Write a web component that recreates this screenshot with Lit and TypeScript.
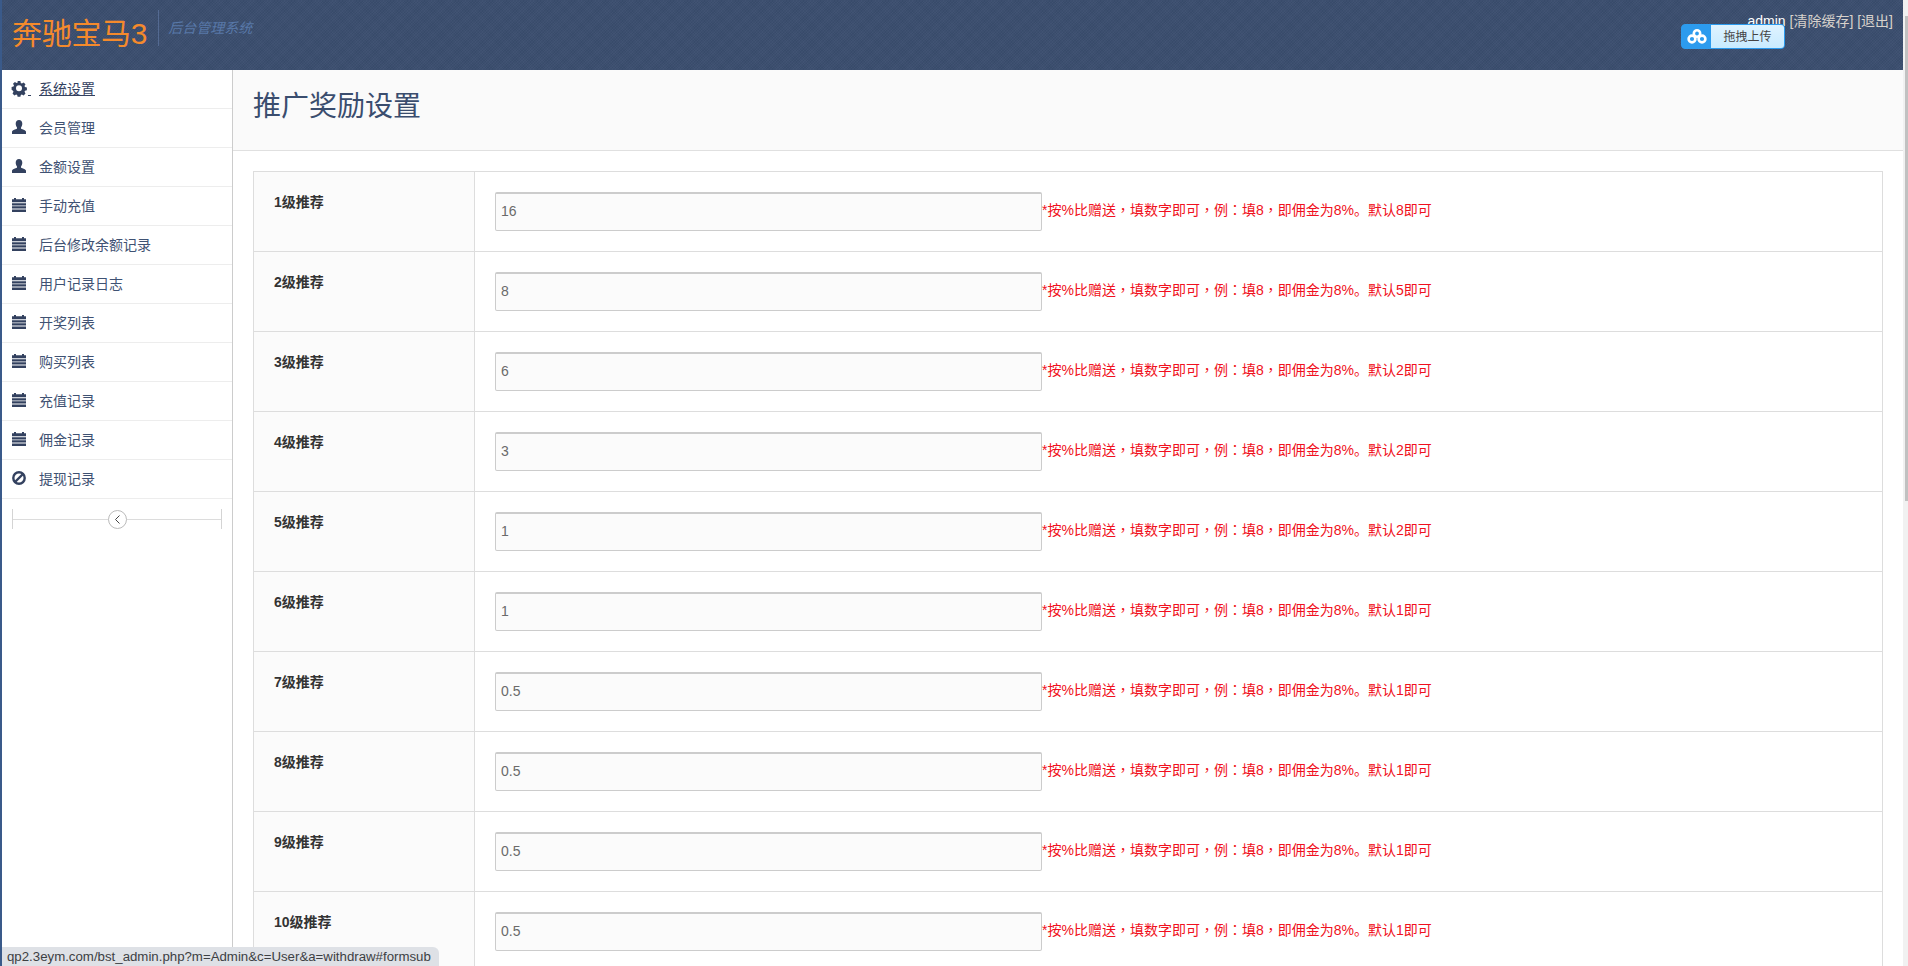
import { LitElement, html, css, svg } from "lit";
import { customElement } from "lit/decorators.js";

const gear = svg`<path fill-rule="evenodd" d="M5.600 0h2.800l.4 1.900 1.100.5 1.700-1 1.900 1.900-1 1.700.5 1.100 1.900.4v2.800l-1.900.4-.5 1.100 1 1.700-1.900 1.900-1.700-1-1.100.5-.4 1.900H5.600l-.4-1.900-1.100-.5-1.700 1-1.900-1.900 1-1.700-.5-1.100L-.4 8.800V6l1.900-.4.500-1.100-1-1.700 1.900-1.900 1.700 1 1.100-.5zM7 4.300a3 3 0 1 0 0 6 3 3 0 0 0 0-6z"/>`;
const user = svg`<path d="M7 0c2.100 0 3.300 1.600 3.300 3.700 0 1.500-.6 2.900-1.300 3.700v1.100c0 .7 4.300 1.200 5 3V14H0v-2.500c.7-1.800 5-2.300 5-3V7.400C4.300 6.600 3.700 5.200 3.700 3.700 3.700 1.600 4.900 0 7 0z"/>`;
const calendar = svg`<path d="M2 0h2v1.200h6V0h2v1.200h2V4.200H0V1.200h2zM0 5.200h14v2.300H0zM0 8.300h14v2.300H0zM0 11.400h14V14H0z"/>`;
const ban = svg`<circle cx="7" cy="7" r="5.700" fill="none" stroke="#33415f" stroke-width="2.400"/><path d="M11 3 3 11" fill="none" stroke="#33415f" stroke-width="2.400"/>`;

const MENU: [string, ReturnType<typeof svg>][] = [
  ["系统设置", gear],
  ["会员管理", user],
  ["金额设置", user],
  ["手动充值", calendar],
  ["后台修改余额记录", calendar],
  ["用户记录日志", calendar],
  ["开奖列表", calendar],
  ["购买列表", calendar],
  ["充值记录", calendar],
  ["佣金记录", calendar],
  ["提现记录", ban],
];

const ROWS: [string, string, string][] = [
  ["1级推荐", "16", "8"],
  ["2级推荐", "8", "5"],
  ["3级推荐", "6", "2"],
  ["4级推荐", "3", "2"],
  ["5级推荐", "1", "2"],
  ["6级推荐", "1", "1"],
  ["7级推荐", "0.5", "1"],
  ["8级推荐", "0.5", "1"],
  ["9级推荐", "0.5", "1"],
  ["10级推荐", "0.5", "1"],
];

@customElement("app-root")
export class AppRoot extends LitElement {
  static styles = css`
    :host {
      display: block;
      position: relative;
      height: 966px;
      overflow: hidden;
      font-family: "Liberation Sans", "Noto Sans CJK SC", sans-serif;
      font-size: 14px;
      color: #393939;
      background: #fff;
      border-left: 2px solid #3a5a8a;
      box-sizing: border-box;
    }
    .header {
      height: 70px;
      display: flex;
      justify-content: space-between;
      background-color: #3a4d6e;
      background-image:
        repeating-linear-gradient(135deg, rgba(255,255,255,.018) 0 1px, rgba(0,0,0,.018) 1px 2px),
        repeating-linear-gradient(45deg, rgba(255,255,255,.014) 0 1px, rgba(0,0,0,.014) 1px 2px);
      margin-right: 5px;
    }
    .brand { display: flex; align-items: flex-start; padding-left: 10px; }
    .logo {
      font-size: 30px;
      line-height: 36px;
      margin-top: 16px;
      color: #f58a2c;
      padding-right: 11px;
      letter-spacing: -0.3px;
    }
    .sub-wrap {
      margin-top: 10px;
      height: 36px;
      border-left: 1px solid #546a92;
      padding-left: 9px;
      font-style: italic;
      font-size: 14px;
      line-height: 36px;
      color: #5878a8;
    }
    .user {
      font-size: 14px;
      color: #d8d2cc;
      margin: 11px 10px 0 0;
      line-height: 20px;
    }
    .user b { font-weight: normal; color: #fff; }
    .upload {
      position: absolute;
      left: 1679px;
      top: 24px;
      width: 104px;
      height: 25px;
      box-sizing: border-box;
      display: flex;
      border-radius: 4px;
      overflow: hidden;
      background: #2c9bee;
      border: 1px solid #2c9bee;
    }
    .upload .ic { width: 29px; display: flex; align-items: center; justify-content: center; }
    .upload .tx {
      flex: 1;
      background: linear-gradient(#dff3ff, #c8ebff);
      color: #444;
      font-size: 12px;
      line-height: 25px;
      text-align: center;
    }
    .main { display: flex; align-items: stretch; height: 896px; margin-right: 5px; }
    .side {
      width: 231px;
      flex: none;
      box-sizing: border-box;
      border-right: 1px solid #ccc;
    }
    .item {
      height: 39px;
      box-sizing: border-box;
      display: flex;
      align-items: center;
      padding: 0 0 3px 10px;
      border-bottom: 1px solid #ededed;
      color: #3f5273;
      font-size: 14px;
    }
    .item svg { width: 14px; height: 14px; fill: #33415f; flex: none; margin-right: 13px; overflow: visible; }
    .item.on { position: relative; }
    .item.on span { text-decoration: underline; color: #33415f; }
    .dash { position: absolute; left: 26px; top: 25px; width: 3px; height: 1px; background: #33415f; }
    .collapse {
      margin: 10px 10px 0;
      height: 20px;
      border-left: 1px solid #d4d4d4;
      border-right: 1px solid #d4d4d4;
      display: flex;
      align-items: center;
      justify-content: center;
      background: linear-gradient(#dcdcdc, #dcdcdc) center / 100% 1px no-repeat;
    }
    .collapse i {
      width: 19px;
      height: 19px;
      box-sizing: border-box;
      border: 1px solid #bbb;
      border-radius: 50%;
      background: #fff;
      display: flex;
      align-items: center;
      justify-content: center;
    }
    .content { flex: 1; min-width: 0; }
    .page-head {
      height: 81px;
      box-sizing: border-box;
      padding: 0 0 0 20px;
      background: #fafafa;
      border-bottom: 1px solid #e0e0e0;
      display: flex;
      align-items: center;
    }
    h1 {
      margin: -7px 0 0;
      font-weight: normal;
      font-size: 28px;
      line-height: 36px;
      color: #3a4d6e;
    }
    .table { margin: 20px 20px 0; border: 1px solid #ddd; border-bottom: 0; }
    .row {
      display: grid;
      grid-template-columns: 221px 1fr;
      height: 80px;
      box-sizing: border-box;
      border-bottom: 1px solid #ddd;
    }
    .label {
      background: #fbfbfb;
      border-right: 1px solid #ddd;
      padding: 20px 0 0 20px;
      font-weight: bold;
      font-size: 14px;
      line-height: 20px;
      color: #333;
    }
    .cell { display: flex; align-items: center; padding: 0 0 0 20px; }
    .input {
      width: 547px;
      height: 39px;
      box-sizing: border-box;
      flex: none;
      border: 1px solid #ccc;
      border-top: 2px solid #ccc;
      border-radius: 2px;
      background: #fbfbfb;
      color: #6a6a6a;
      font-family: "Liberation Sans", sans-serif;
      font-size: 14px;
      padding: 0 5px 2px;
      outline: none;
    }
    .hint { color: #f01020; font-size: 14px; margin-top: -6px; white-space: nowrap; }
    .hint .p { font-family: "Liberation Sans", "Noto Sans CJK TC", sans-serif; }
    .status {
      position: absolute;
      left: 0;
      bottom: 0;
      height: 19px;
      width: 437px;
      box-sizing: border-box;
      background: #dee1e6;
      border-top-right-radius: 6px;
      color: #3c4043;
      font-size: 13.25px;
      line-height: 19px;
      padding-left: 5px;
      white-space: nowrap;
    }
    .scroll {
      position: absolute;
      right: 0;
      top: 0;
      bottom: 0;
      width: 5px;
      background: #f1f1f1;
    }
    .scroll i { display: block; margin: 16px 0 0 2px; height: 485px; background: #c1c1c1; }
  `;

  render() {
    const p = (c: string) => html`<span class="p">${c}</span>`;
    return html`
      <div class="header">
        <div class="brand">
          <div class="logo">奔驰宝马3</div>
          <div class="sub-wrap">后台管理系统</div>
        </div>
        <div class="user"><b>admin</b> [清除缓存] [退出]</div>
      </div>
      <div class="upload">
        <div class="ic">
          <svg width="20" height="15" viewBox="0 0 20 15" fill="none" stroke="#fff" stroke-width="2.600">
            <circle cx="10" cy="4.500" r="3.200"/><circle cx="5" cy="10" r="3.400"/><circle cx="15" cy="10" r="3.400"/>
          </svg>
        </div>
        <div class="tx">拖拽上传</div>
      </div>
      <div class="main">
        <div class="side">
          ${MENU.map(([t, ic], i) => html`
            <div class="item ${i === 0 ? "on" : ""}">
              <svg viewBox="0 0 14 14">${ic}</svg><span>${t}</span>
              ${i === 0 ? html`<div class="dash"></div>` : ""}
            </div>`)}
          <div class="collapse">
            <i><svg width="7" height="9" viewBox="0 0 7 9" fill="none" stroke="#444"><path d="M5.500 .5 1.500 4.500l4 4"/></svg></i>
          </div>
        </div>
        <div class="content">
          <div class="page-head"><h1>推广奖励设置</h1></div>
          <div class="table">
            ${ROWS.map(([l, v, d]) => html`
              <div class="row">
                <div class="label">${l}</div>
                <div class="cell">
                  <input class="input" .value=${v} />
                  <span class="hint">*按%比赠送${p("，")}填数字即可${p("，")}例${p("：")}填8${p("，")}即佣金为8%。默认${d}即可</span>
                </div>
              </div>`)}
          </div>
        </div>
      </div>
      <div class="status">qp2.3eym.com/bst_admin.php?m=Admin&amp;c=User&amp;a=withdraw#formsub</div>
      <div class="scroll"><i></i></div>
    `;
  }
}
